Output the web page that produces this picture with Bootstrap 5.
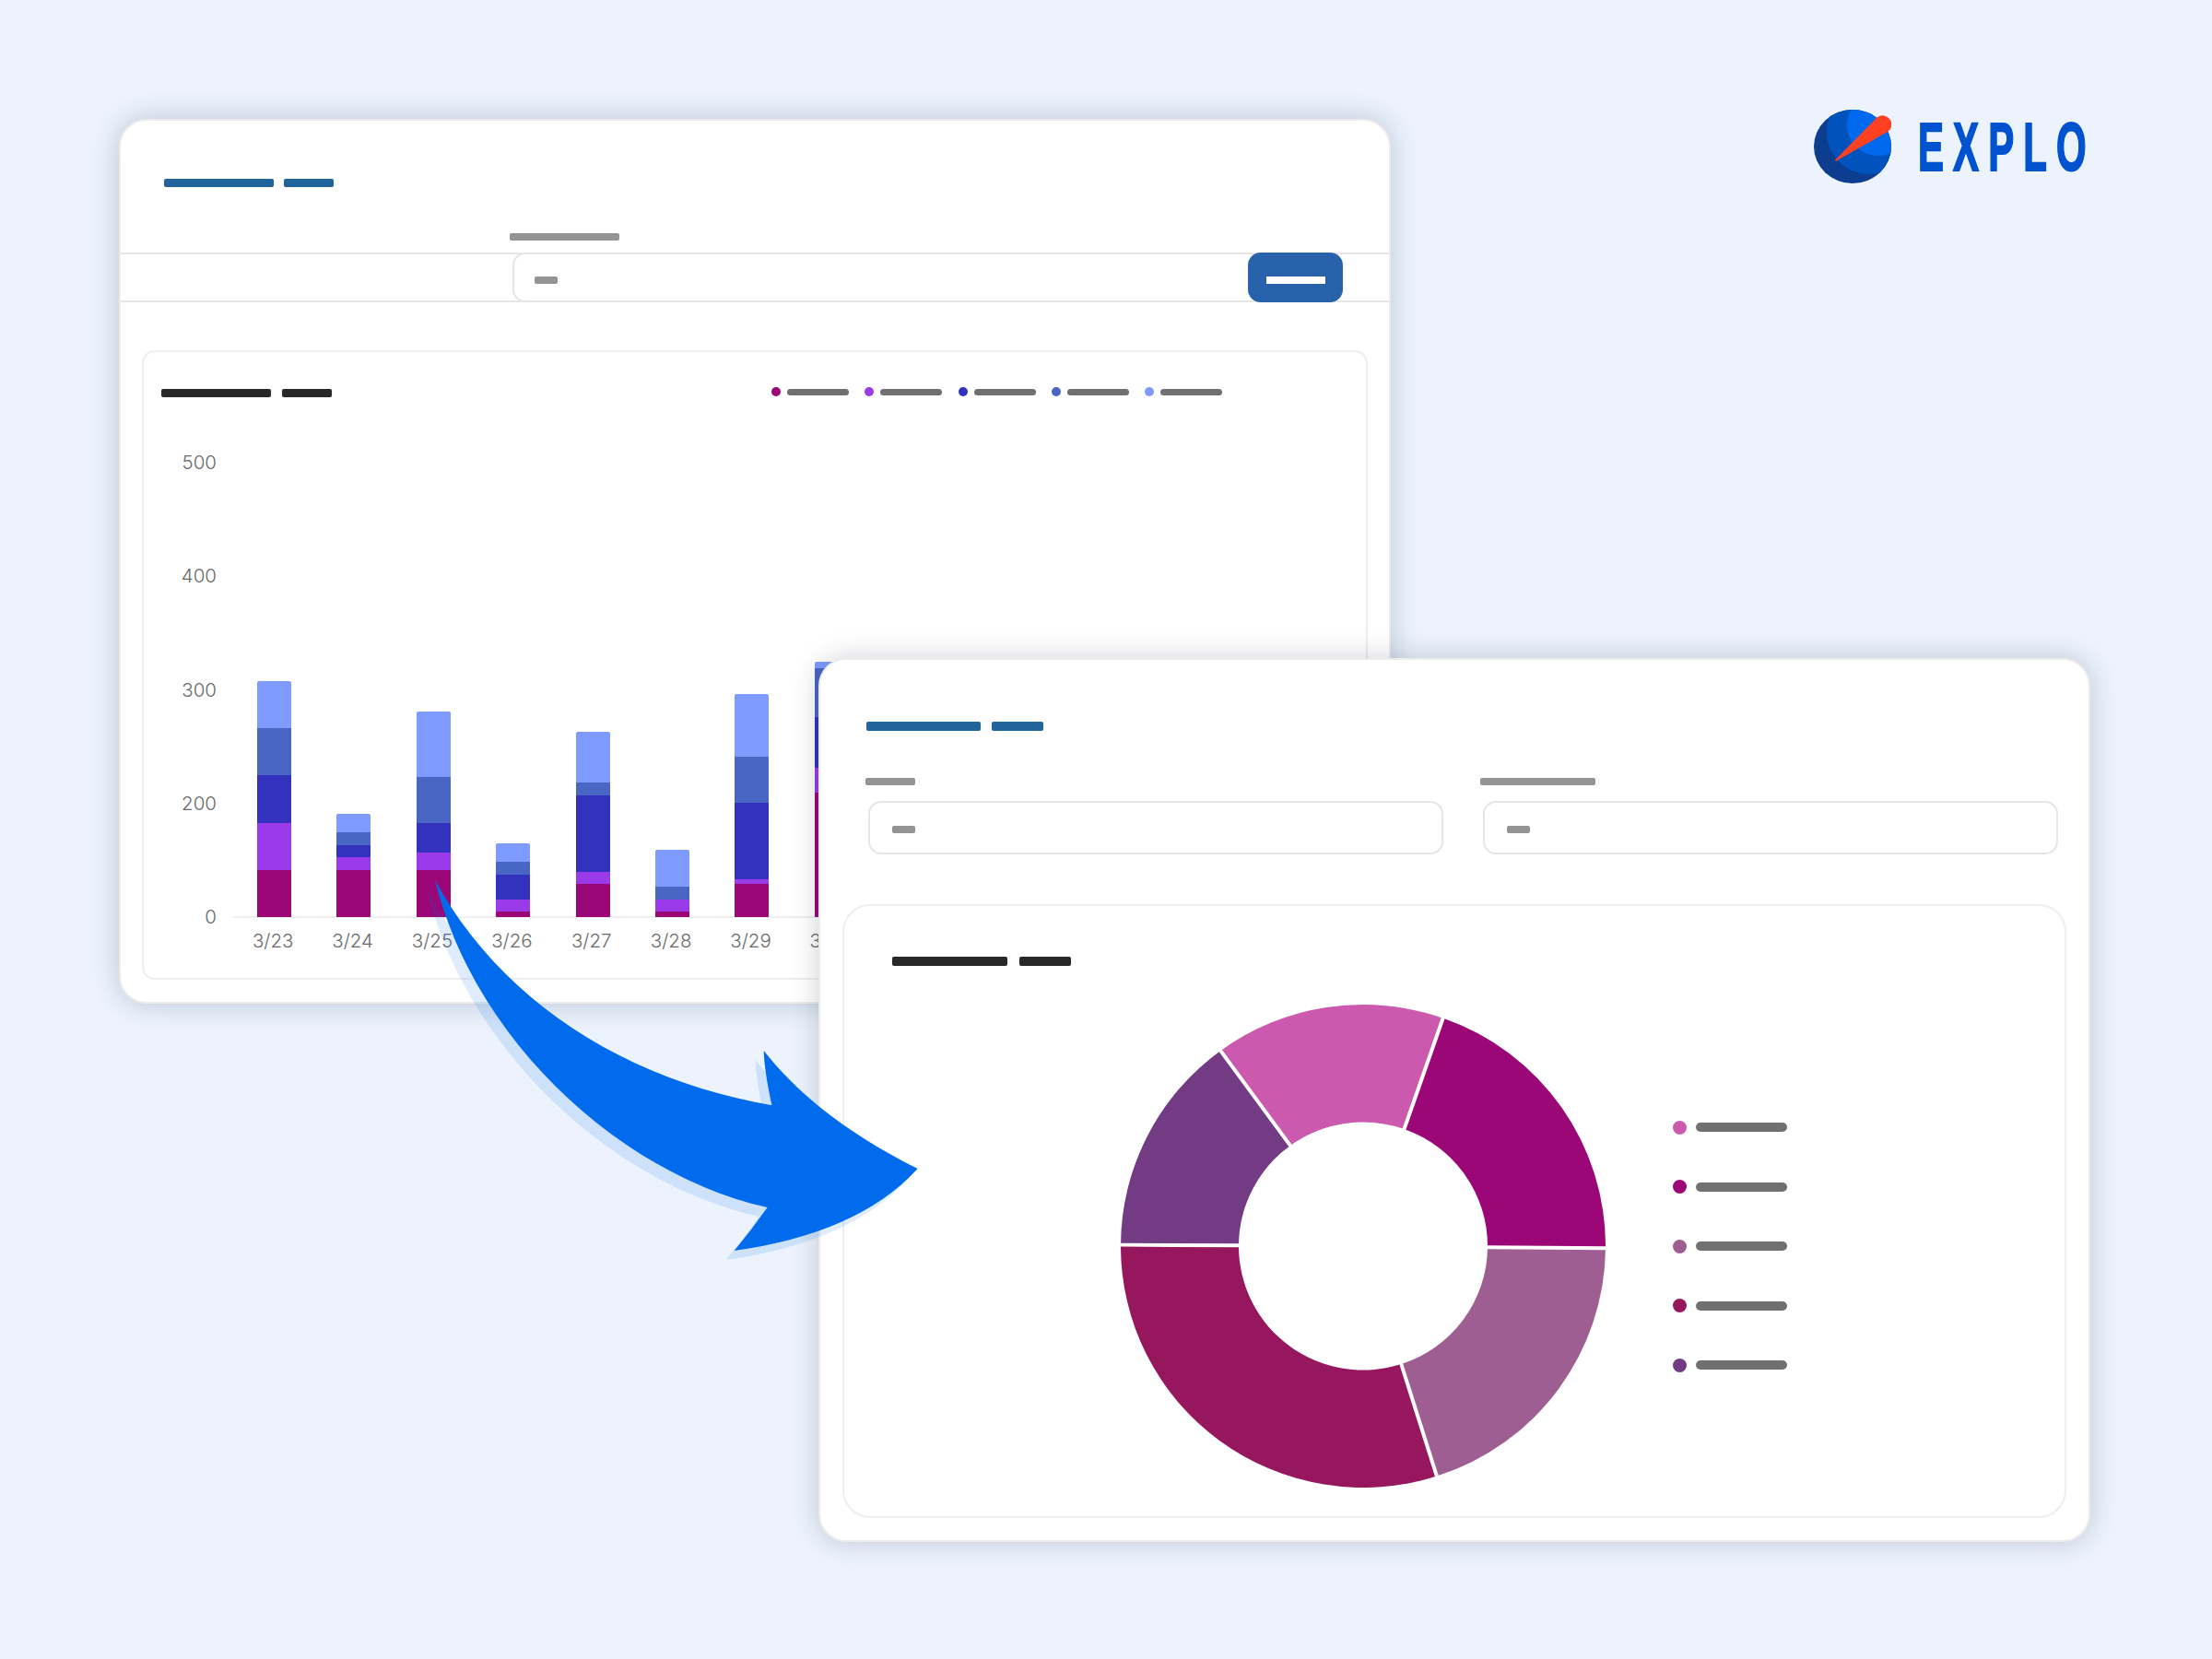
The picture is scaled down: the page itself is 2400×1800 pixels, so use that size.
<!DOCTYPE html>
<html lang="en">
<head>
<meta charset="utf-8">
<title>Explo</title>
<link href="https://cdn.jsdelivr.net/npm/bootstrap@5.3.0/dist/css/bootstrap.min.css" rel="stylesheet">
<style>
html,body{margin:0;background:#ecf3fc}
.stage{position:relative;width:2400px;height:1800px;overflow:hidden;background:#ecf3fc;padding:129px 0 0 129px;font-family:Inter,"Liberation Sans",sans-serif}
.win{border:2px solid #ececec;background:#fff;box-shadow:0 0 30px rgba(30,50,90,.24);flex:none;width:1380px;height:960px;border-radius:30px;--bs-card-bg:#fff}
.win-front{position:absolute;left:888px;top:714px;width:1380px;height:959px;box-shadow:0 0 30px rgba(30,40,70,.22)}
.bar-t{display:block;height:9px;border-radius:2px;background:#20649b}
.bar-h{display:block;height:9px;border-radius:2px;background:#282828}
.bar-l{display:block;height:8px;border-radius:2px;background:#949494}
.bar-g{display:block;height:7px;border-radius:4px;background:#707070;width:67px}
.w119{width:119px}.w54{width:54px}.w25{width:25px}
.dot{display:block;width:10px;height:10px;border-radius:50%;flex:none}
.head-a{padding:63px 0 0 47px;gap:11px}
.label-a{margin:50px 0 13px 422px}
.band{height:54px;border-top:2px solid #e6e6e6;border-bottom:2px solid #e6e6e6;padding:0 50px 0 425px}
.fake-input{border:2px solid #e6e6e6;border-radius:14px;background:#fff;padding:0;align-items:center}
.band .fake-input{margin:-2px 0;flex:1;border-right:0;padding-left:22px;border-radius:14px 0 0 14px;padding-top:5px}
.go{width:103px;margin:-2px 0;height:54px;padding:0;background:#2762aa;border:0;border-radius:14px;--bs-btn-bg:#2762aa}
.go span{display:block;width:64px;height:8px;background:#fff;margin:5px auto 0}
.panel-a{margin:52px 23px 0;height:683px;border:2px solid #eeeeee;border-radius:14px;padding:40px 0 0 19px}
.panel-a .titles{gap:12px;width:662px}
.legs{gap:17.3px;margin-top:-3px}
.leg-item{gap:7px;flex:none}
.chart{margin-top:59px;margin-left:-19px}
.yaxis{width:79px;height:517px;margin-right:18px;flex:none;font-size:20.5px;font-weight:300;color:#6a6a6a;line-height:24px;text-align:right;justify-content:space-between}
.plot{height:507px;width:1300px;border-bottom:2px solid #eeeeee;margin-top:-1px;padding-left:26px;gap:49.4px;align-items:flex-end}
.col-bar{width:37px;flex:none;border-radius:2px 2px 0 0;overflow:hidden;margin-bottom:-1px}
.xlabels{font-size:20.5px;font-weight:300;color:#6a6a6a;line-height:24px;margin-top:13px}
.xlabels span{display:block;width:86.4px;flex:none;text-align:center}
.head-b{padding:67px 0 0 49.5px;gap:12px}
.bar-t.big,.bar-h.big{height:10px}
.w124{width:124.5px}.w56{width:56px}
.fields{gap:40px;padding-left:49px;margin-top:51px}
.field{width:627px;flex:none}
.w54b{width:54px}.w125{width:125px}
.field .fake-input{margin:17px 0 0 3px;height:58px;padding-left:24px;padding-top:3px}
.panel-b{margin:54px 24px 0 24px;height:666px;border:2px solid #eeeeee;border-radius:30px;padding:55px 0 0 52px}
.head-c{gap:13px}
.donut-row{margin:42px 0 0 248px}
.donut{width:526px;height:524px;flex:none;display:block}
.legend-b{margin-left:73px;gap:49.5px}
.legend-b .dot{width:15px;height:15px}
.legend-b .bar-g{width:99px;height:10px;border-radius:5px}
.legend-b .leg-row{gap:10px}
.arrow{position:absolute;left:0;top:0;width:2400px;height:1800px;pointer-events:none}
.brand{margin:-10px 0 0 459px;flex:none;gap:29px}
.brand svg{display:block}
.wordmark{display:block;font-family:"Liberation Sans",Arial,sans-serif;font-weight:700;font-size:75px;line-height:80px;color:#0052cf;-webkit-text-stroke:2px #0052cf;transform:scaleX(.56);transform-origin:left center;letter-spacing:18px;white-space:nowrap;width:183px}
</style>
</head>
<body>
<div class="stage d-flex align-items-start">

  <div class="card win">
    <div class="d-flex head-a"><span class="bar-t w119"></span><span class="bar-t w54"></span></div>
    <div class="label-a"><span class="bar-l w119"></span></div>
    <div class="band d-flex">
      <div class="fake-input d-flex"><span class="bar-l w25"></span></div>
      <button type="button" class="btn go"><span></span></button>
    </div>
    <div class="panel-a">
      <div class="d-flex">
        <div class="d-flex titles"><span class="bar-h w119"></span><span class="bar-h w54"></span></div>
        <div class="d-flex legs align-items-center">
          <div class="d-flex align-items-center leg-item"><span class="dot" style="background:#9b0776"></span><span class="bar-g"></span></div>
          <div class="d-flex align-items-center leg-item"><span class="dot" style="background:#9b3ae8"></span><span class="bar-g"></span></div>
          <div class="d-flex align-items-center leg-item"><span class="dot" style="background:#3232bf"></span><span class="bar-g"></span></div>
          <div class="d-flex align-items-center leg-item"><span class="dot" style="background:#4a66c4"></span><span class="bar-g"></span></div>
          <div class="d-flex align-items-center leg-item"><span class="dot" style="background:#7f9bff"></span><span class="bar-g"></span></div>
        </div>
      </div>
      <div class="d-flex chart">
        <div class="d-flex flex-column yaxis"><span>500</span><span>400</span><span>300</span><span>200</span><span>0</span></div>
        <div class="d-flex flex-column">
          <div class="d-flex plot">
            <div class="col-bar"><div style="height:51px;background:#7f9bff"></div><div style="height:51px;background:#4a66c4"></div><div style="height:52px;background:#3232bf"></div><div style="height:51px;background:#9b3ae8"></div><div style="height:51px;background:#9b0776"></div></div>
            <div class="col-bar"><div style="height:20px;background:#7f9bff"></div><div style="height:14px;background:#4a66c4"></div><div style="height:13px;background:#3232bf"></div><div style="height:14px;background:#9b3ae8"></div><div style="height:51px;background:#9b0776"></div></div>
            <div class="col-bar"><div style="height:71px;background:#7f9bff"></div><div style="height:50px;background:#4a66c4"></div><div style="height:32px;background:#3232bf"></div><div style="height:19px;background:#9b3ae8"></div><div style="height:51px;background:#9b0776"></div></div>
            <div class="col-bar"><div style="height:20px;background:#7f9bff"></div><div style="height:14px;background:#4a66c4"></div><div style="height:27px;background:#3232bf"></div><div style="height:13px;background:#9b3ae8"></div><div style="height:6px;background:#9b0776"></div></div>
            <div class="col-bar"><div style="height:55px;background:#7f9bff"></div><div style="height:14px;background:#4a66c4"></div><div style="height:83px;background:#3232bf"></div><div style="height:13px;background:#9b3ae8"></div><div style="height:36px;background:#9b0776"></div></div>
            <div class="col-bar"><div style="height:40px;background:#7f9bff"></div><div style="height:14px;background:#4a66c4"></div><div style="height:13px;background:#9b3ae8"></div><div style="height:6px;background:#9b0776"></div></div>
            <div class="col-bar"><div style="height:68px;background:#7f9bff"></div><div style="height:50px;background:#4a66c4"></div><div style="height:83px;background:#3232bf"></div><div style="height:5px;background:#9b3ae8"></div><div style="height:36px;background:#9b0776"></div></div>
            <div class="col-bar"><div style="height:7px;background:#7f9bff"></div><div style="height:53px;background:#4a66c4"></div><div style="height:55px;background:#3232bf"></div><div style="height:27px;background:#9b3ae8"></div><div style="height:135px;background:#9b0776"></div></div>
          </div>
          <div class="d-flex xlabels"><span>3/23</span><span>3/24</span><span>3/25</span><span>3/26</span><span>3/27</span><span>3/28</span><span>3/29</span><span>3/30</span></div>
        </div>
      </div>
    </div>
  </div>

  <div class="d-flex align-items-center brand">
    <svg width="84" height="80" viewBox="0 0 84 80" aria-hidden="true">
      <defs><clipPath id="globe"><ellipse cx="42" cy="40" rx="42" ry="40"/></clipPath></defs>
      <ellipse cx="42" cy="40" rx="42" ry="40" fill="#0d3d8f"/>
      <g clip-path="url(#globe)">
        <circle cx="60" cy="24" r="46" fill="#0052bd"/>
        <circle cx="69" cy="17" r="33" fill="#0069ee"/>
      </g>
      <path d="M23.7 55 L69.5 8.6 A9 9 0 0 1 80.5 22.8 Z" fill="#ff4122" stroke="#ff4122" stroke-width="1.5" stroke-linejoin="round"/>
    </svg>
    <span class="wordmark">EXPLO</span>
  </div>

  <div class="card win win-front">
    <div class="d-flex head-b"><span class="bar-t big w124"></span><span class="bar-t big w56"></span></div>
    <div class="d-flex fields">
      <div class="field"><span class="bar-l w54b"></span><div class="fake-input d-flex"><span class="bar-l w25"></span></div></div>
      <div class="field"><span class="bar-l w125"></span><div class="fake-input d-flex"><span class="bar-l w25"></span></div></div>
    </div>
    <div class="panel-b">
      <div class="d-flex head-c"><span class="bar-h big w124"></span><span class="bar-h big w56"></span></div>
      <div class="d-flex align-items-center donut-row">
        <svg class="donut" viewBox="0 0 526 526" preserveAspectRatio="none" aria-hidden="true">
          <path fill="#cb5aae" d="M108.4 50.2 A263 263 0 0 1 349.9 14.8 L307.6 135.6 A135 135 0 0 0 183.6 153.8 Z"/>
          <path fill="#9b0776" d="M349.9 14.8 A263 263 0 0 1 526 265.3 L398 264.2 A135 135 0 0 0 307.6 135.6 Z"/>
          <path fill="#9f5e91" d="M526 265.3 A263 263 0 0 1 343.2 513.5 L304.2 391.6 A135 135 0 0 0 398 264.2 Z"/>
          <path fill="#96175e" d="M343.2 513.5 A263 263 0 0 1 0 261.6 L128 262.3 A135 135 0 0 0 304.2 391.6 Z"/>
          <path fill="#733b84" d="M0 261.6 A263 263 0 0 1 108.4 50.2 L183.6 153.8 A135 135 0 0 0 128 262.3 Z"/>
          <g stroke="#fff" stroke-width="4">
            <line x1="351" y1="11" x2="307" y2="137"/>
            <line x1="530" y1="265.3" x2="396" y2="264.2"/>
            <line x1="344" y1="517" x2="303.5" y2="389"/>
            <line x1="-4" y1="261.6" x2="130" y2="262.3"/>
            <line x1="106" y1="47" x2="185" y2="155"/>
          </g>
        </svg>
        <div class="d-flex flex-column legend-b">
          <div class="d-flex align-items-center leg-row"><span class="dot" style="background:#cb5aae"></span><span class="bar-g"></span></div>
          <div class="d-flex align-items-center leg-row"><span class="dot" style="background:#9b0776"></span><span class="bar-g"></span></div>
          <div class="d-flex align-items-center leg-row"><span class="dot" style="background:#9f5e91"></span><span class="bar-g"></span></div>
          <div class="d-flex align-items-center leg-row"><span class="dot" style="background:#96175e"></span><span class="bar-g"></span></div>
          <div class="d-flex align-items-center leg-row"><span class="dot" style="background:#733b84"></span><span class="bar-g"></span></div>
        </div>
      </div>
    </div>
  </div>

  <svg class="arrow" viewBox="0 0 2400 1800" aria-hidden="true">
    <path transform="translate(-9 10)" fill="#006ced" fill-opacity=".13" d="M472 955 C540 1080 670 1170 837.4 1199.3 Q829 1160 828.7 1140 C860 1180 910 1225 995.6 1268 Q932 1338 796.7 1357 Q815 1335 832.6 1310 C675 1275 515 1130 472 955 Z"/>
    <path fill="#006ced" d="M472 955 C540 1080 670 1170 837.4 1199.3 Q829 1160 828.7 1140 C860 1180 910 1225 995.6 1268 Q932 1338 796.7 1357 Q815 1335 832.6 1310 C675 1275 515 1130 472 955 Z"/>
  </svg>
</div>
<script src="https://cdn.jsdelivr.net/npm/bootstrap@5.3.0/dist/js/bootstrap.bundle.min.js"></script>
</body>
</html>
